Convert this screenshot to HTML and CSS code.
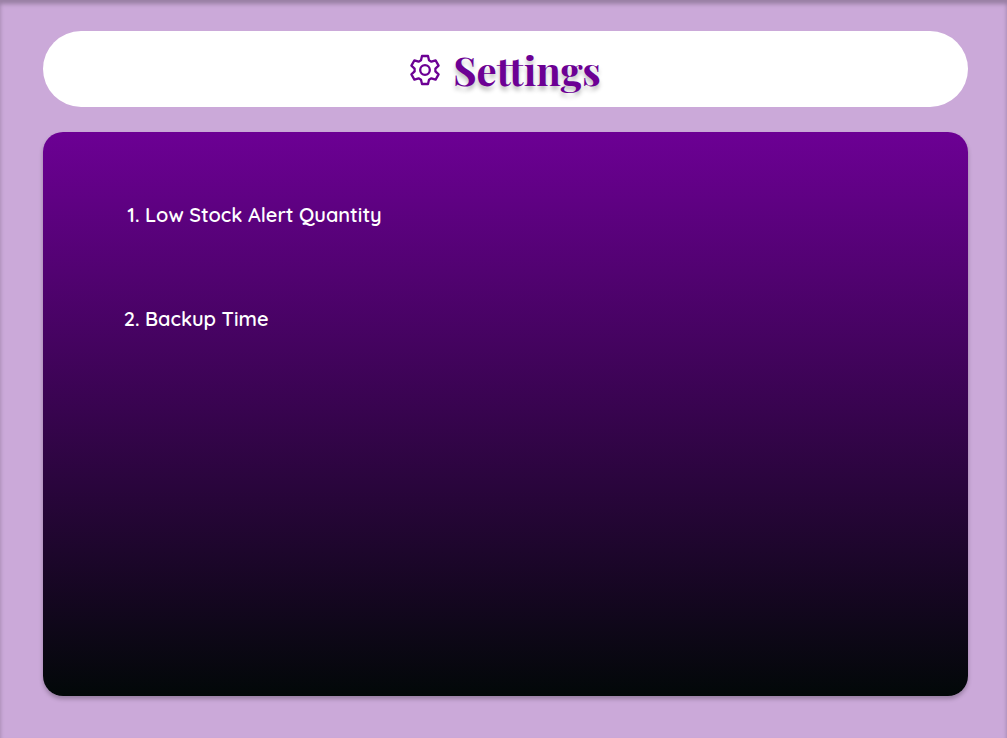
FILE: index.html
```html
<!DOCTYPE html>
<html lang="en">
<head>
<meta charset="utf-8">
<meta name="viewport" content="width=device-width, initial-scale=1">
<title>Settings</title>
<link rel="stylesheet" href="styles.css">
</head>
<body class="page">
<header class="title-bar">
  <svg class="gear" viewBox="-16 -16 32 32" stroke-width="2.3" aria-hidden="true">
    <path d="M-4-9.7L-3-14H3L4-9.7L6.4-8.3L10.6-9.6L13.6-4.4L10.4-1.4V1.4L13.6 4.4L10.6 9.6L6.4 8.3L4 9.7L3 14H-3L-4 9.7L-6.4 8.3L-10.6 9.6L-13.6 4.4L-10.4 1.4V-1.4L-13.6-4.4L-10.6-9.6L-6.4-8.3Z"/>
    <circle r="4.8"/>
  </svg>
  <h1 class="title">Settings</h1>
</header>
<main class="panel">
  <ol class="options">
    <li class="option">Low Stock Alert Quantity</li>
    <li class="option">Backup Time</li>
  </ol>
</main>
</body>
</html>
```

FILE: styles.css
```css
* {
  box-sizing: border-box;
}

.page {
  display: flex;
  flex-direction: column;
  gap: 25px;
  min-height: 100vh;
  margin: 0;
  padding: 31px 39px 42px 43px;
  background: #cba9d9;
  box-shadow: inset 0 4px 4px rgba(0, 0, 0, 0.25);
}

.title-bar {
  display: flex;
  align-items: center;
  justify-content: center;
  gap: 12px;
  padding: 15px 25px 13px 24px;
  border-radius: 38px;
  background: #fff;
}

.gear {
  width: 32px;
  height: 32px;
  fill: none;
  stroke: #6c0094;
  stroke-linejoin: round;
}

.title {
  margin: 0;
  color: #6c0094;
  font: bold 40px/48px "Playfair Display", "Liberation Serif", serif;
  text-shadow: 0 4px 4px rgba(0, 0, 0, 0.25);
}

.panel {
  flex: 1;
  padding: 70px 24px 24px 102px;
  border-radius: 20px;
  background: linear-gradient(#6c0094, #020808);
  box-shadow: 0 3px 4px rgba(0, 0, 0, 0.25);
}

.options {
  display: grid;
  gap: 78px;
  margin: 0;
  padding: 0;
  color: #fff;
  font: 600 20px/26px Quicksand, Lato, sans-serif;
}
```
